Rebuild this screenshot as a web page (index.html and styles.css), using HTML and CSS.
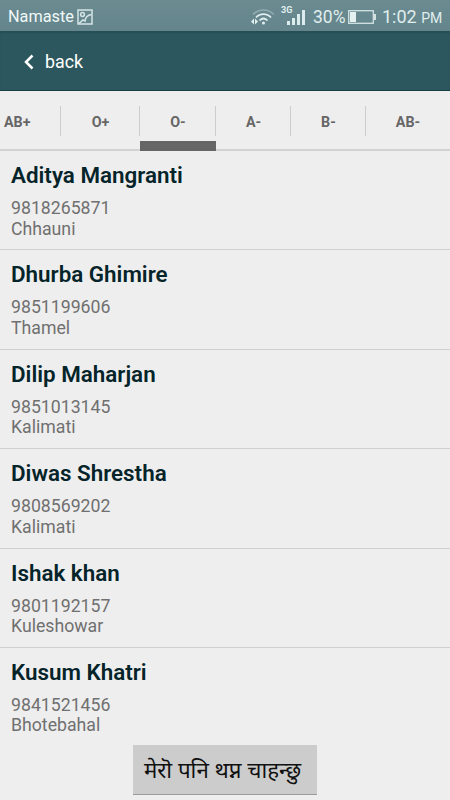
FILE: index.html
```html
<!DOCTYPE html>
<html lang="en">
<head>
    <meta charset="UTF-8">
    <meta name="viewport" content="width=device-width, initial-scale=1.0">
    <title>Blood donors</title>
    <link rel="stylesheet" href="styles.css">
</head>
<body>
    <div class="statusbar">
        <span class="carrier">Namaste</span>
        <svg class="picture" width="16" height="16" viewBox="0 0 16 16" fill="none" stroke="#d5e5e6" stroke-width="1.5">
            <rect x="1" y="1" width="14" height="14"/>
            <circle cx="5.5" cy="5.5" r="1.9"/>
            <path d="M2 14.500L6 11L8 12C8.500 8 11 6 14.500 5.500"/>
        </svg>
        <svg class="wifi" width="24" height="18" viewBox="0 0 24 18" fill="none" stroke="#e0eeee" stroke-width="1.7">
            <path d="M2 6.500C8 .5 17 .5 23 6.500" stroke="#91abb0"/>
            <path d="M5 9.500C9 5 16 5 20 9.500"/>
            <path d="M8.500 12.500C11 10 14 10 16.500 12.500"/>
            <circle cx="12.500" cy="15" r="1.500" fill="#e0eeee" stroke="none"/>
            <path d="M0 13.500L3 10.500V16.500ZM7 13.500L4 10.500V16.500Z" fill="#e0eeee" stroke="none"/>
        </svg>
        <div class="signal">
            <span class="network">3G</span>
            <svg width="19" height="16" viewBox="0 0 19 16" fill="#dcebec">
                <rect x="0" y="12" width="3" height="4"/>
                <rect x="5" y="9" width="3" height="7"/>
                <rect x="10" y="5" width="3" height="11"/>
                <rect x="15" y="1" width="3" height="15"/>
            </svg>
        </div>
        <span class="percent">30%</span>
        <svg class="battery" width="28" height="14" viewBox="0 0 28 14">
            <rect x=".7" y=".7" width="24.600" height="12.600" fill="none" stroke="#d3e3e4" stroke-width="1.300"/>
            <rect x="2" y="2" width="6" height="10" fill="#e5f1f1"/>
            <path d="M26 4H28V10H26Z" fill="#d3e3e4"/>
        </svg>
        <span class="time">1:02 <small>PM</small></span>
    </div>

    <div class="header">
        <svg width="10" height="16" viewBox="0 0 10 16" fill="none" stroke="#fff" stroke-width="2.500">
            <path d="M8.500 1.500L2 8L8.500 14.500"/>
        </svg>
        <span>back</span>
    </div>

    <div class="tabs">
        <div class="tab ab-plus">AB+</div>
        <div class="tab o-plus">O+</div>
        <div class="tab active">O-</div>
        <div class="tab">A-</div>
        <div class="tab">B-</div>
        <div class="tab ab-minus">AB-</div>
    </div>

    <div class="list">
        <div class="donor">
            <h2>Aditya Mangranti</h2>
            <p>9818265871</p>
            <p>Chhauni</p>
        </div>
        <div class="donor">
            <h2>Dhurba Ghimire</h2>
            <p>9851199606</p>
            <p>Thamel</p>
        </div>
        <div class="donor">
            <h2>Dilip Maharjan</h2>
            <p>9851013145</p>
            <p>Kalimati</p>
        </div>
        <div class="donor">
            <h2>Diwas Shrestha</h2>
            <p>9808569202</p>
            <p>Kalimati</p>
        </div>
        <div class="donor">
            <h2>Ishak khan</h2>
            <p>9801192157</p>
            <p>Kuleshowar</p>
        </div>
        <div class="donor">
            <h2>Kusum Khatri</h2>
            <p>9841521456</p>
            <p>Bhotebahal</p>
        </div>
    </div>

    <button class="add" lang="ne">मेरॊ पनि थप्न चाहन्छु</button>
</body>
</html>
```
FILE: styles.css
```css
* {
    box-sizing: border-box;
}
body {
    margin: 0;
    height: 800px;
    display: flex;
    flex-direction: column;
    font-family: Roboto, sans-serif;
    background: #eee;
    overflow: hidden;
}
.statusbar {
    display: flex;
    align-items: center;
    flex: none;
    height: 31px;
    padding: 2px 8px 0;
    background: linear-gradient(#6b8b91, #63858b);
    color: #e0eeee;
}
.statusbar > * {
    flex: none;
}
.carrier {
    width: 69px;
    font-size: 16.3px;
    color: #f0f8f8;
}
.wifi {
    margin-left: 158px;
}
.signal {
    display: flex;
    margin-left: 6px;
}
.network {
    width: 6px;
    font-size: 9px;
    font-weight: bold;
    line-height: 8px;
    margin-top: -3px;
}
.percent {
    width: 35px;
    margin-left: 7px;
    font-size: 17.5px;
}
.time {
    margin-left: 6px;
    font-size: 18px;
    white-space: nowrap;
}
.time small {
    font-size: 14px;
}
.header {
    display: flex;
    align-items: center;
    flex: none;
    gap: 11px;
    height: 60px;
    padding: 2px 24px 0;
    background: #2d575e;
    border-bottom: 1px solid #153e45;
    box-shadow: inset 0 2px 2px #264e55;
    color: #fff;
    font-size: 17.8px;
}
.tabs {
    display: flex;
    flex: none;
    height: 60px;
    border-bottom: 2px solid #d2d2d2;
}
.tab {
    position: relative;
    width: 75px;
    height: 60px;
    line-height: 62px;
    text-align: center;
    font-size: 14.3px;
    font-weight: bold;
    color: #666;
}
.tab::after {
    content: "";
    position: absolute;
    top: 15px;
    right: 0;
    width: 1px;
    height: 30px;
    background: #cdcdcd;
}
.ab-plus {
    width: 61px;
    padding-left: 4px;
    text-align: left;
}
.o-plus {
    width: 79px;
}
.active {
    width: 76px;
    border-bottom: 10px solid #666;
}
.ab-minus {
    width: 84px;
}
.ab-minus::after {
    display: none;
}
.donor {
    height: 99.4px;
    padding: 10px 11px 0;
    border-bottom: 1px solid #cfcfcf;
}
.donor:last-child {
    border-bottom: none;
}
.donor h2 {
    margin: 0 0 9px;
    font-size: 22.4px;
    line-height: 28px;
    font-weight: 600;
    color: #05242a;
}
.donor p {
    margin: 0;
    font-size: 17.7px;
    line-height: 20.5px;
    color: #707070;
}
.add {
    position: absolute;
    left: 133px;
    bottom: 5px;
    width: 184px;
    height: 50px;
    padding: 0 5px 0 0;
    border: none;
    border-bottom: 1px solid #9b9b9b;
    background: #ccc;
    color: #111;
    font-family: "Noto Sans", "Noto Sans Devanagari", sans-serif;
    font-size: 22.3px;
    white-space: nowrap;
}
```
